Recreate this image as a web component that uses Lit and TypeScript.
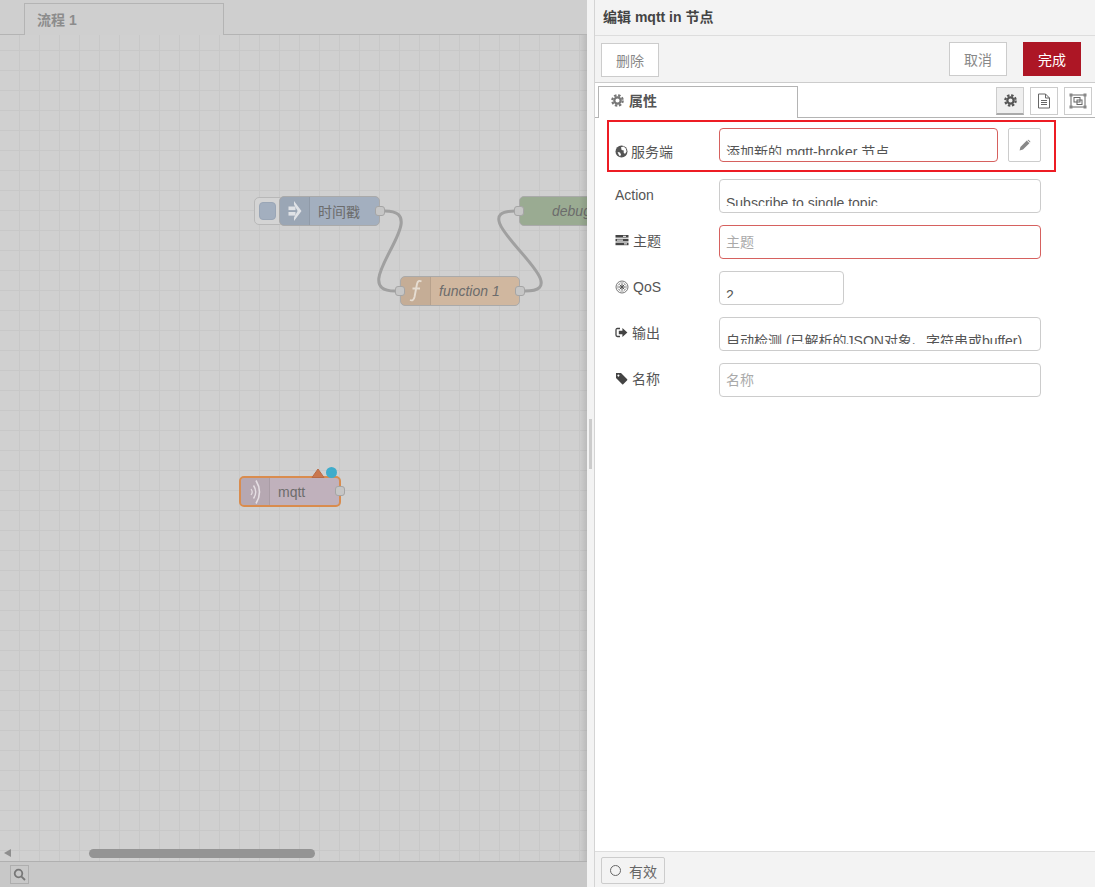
import { LitElement, html, css, svg } from "lit";
import { customElement } from "lit/decorators.js";

const gear = svg`<svg class="ic" width="13" height="13" viewBox="0 0 14 14"><circle cx="7" cy="7" r="5.6" fill="none" stroke="currentColor" stroke-width="2.4" stroke-dasharray="2.6 1.8"/><circle cx="7" cy="7" r="3.4" fill="none" stroke="currentColor" stroke-width="2.4"/></svg>`;

const globe = svg`<svg class="ic" width="13" height="13" viewBox="0 0 13 13"><circle cx="6.5" cy="6.5" r="6" fill="#555"/><path d="M6 2.2 L8.6 1.6 L10.8 3.4 L11.6 6.6 L10 9 L8.6 7.6 L8.8 5.6 L6.6 5 Z M2.6 7 L5 7.6 L6 9.6 L5 11.4 L3.6 9.6 Z" fill="#fff"/></svg>`;

const tasks = svg`<svg class="ic" width="14" height="14" viewBox="0 0 14 14" fill="#444"><rect x="0.5" y="2" width="13" height="2.6"/><rect x="0.5" y="5.8" width="13" height="2.6"/><rect x="0.5" y="9.6" width="13" height="2.6"/><rect x="8" y="2.8" width="3" height="1" fill="#fff"/><rect x="2" y="6.6" width="6" height="1" fill="#fff"/><rect x="9" y="10.4" width="3" height="1" fill="#fff"/></svg>`;

const qos = svg`<svg class="ic" width="14" height="14" viewBox="0 0 14 14"><circle cx="7" cy="7" r="6" fill="none" stroke="#777" stroke-width="1"/><circle cx="7" cy="7" r="4.4" fill="none" stroke="#aaa" stroke-width="0.8"/><path d="M7 3.4V10.6M3.4 7H10.6M4.5 4.5L9.5 9.5M9.5 4.5L4.5 9.5" stroke="#555" stroke-width="1"/><circle cx="7" cy="7" r="1.2" fill="#555"/></svg>`;

const signOut = svg`<svg class="ic" width="13" height="13" viewBox="0 0 13 13"><path d="M5 2.5H2.4Q1 2.5 1 3.9V9.1Q1 10.5 2.4 10.5H5" fill="none" stroke="#444" stroke-width="1.3"/><path d="M3.8 4.8H7.4V2L12.4 6.5L7.4 11V8.2H3.8Z" fill="#444"/></svg>`;

const tag = svg`<svg class="ic" width="13" height="13" viewBox="0 0 13 13"><path fill-rule="evenodd" d="M1 1H6L12.2 7.2Q12.6 7.8 12.2 8.2L8.2 12.2Q7.6 12.6 7.2 12.2L1 6Z M3.4 2.4A1 1 0 1 0 3.41 2.4Z" fill="#444"/></svg>`;

const pencil = svg`<svg width="12" height="12" viewBox="0 0 12 12"><path d="M0.6 11.4L1.4 8L7.8 1.6L10.4 4.2L4 10.6Z M8.6 0.9Q9.2 0.4 9.8 0.9L11.1 2.2Q11.6 2.8 11.1 3.4L10.9 3.6L8.4 1.1Z" fill="#888"/></svg>`;

const fileDoc = svg`<svg width="14" height="16" viewBox="0 0 14 16" fill="none" stroke="#666" stroke-width="1"><path d="M1.5 1H8.5L12.5 5V15H1.5Z"/><path d="M8.5 1V5H12.5M4 7.5H10M4 9.5H10M4 11.5H10"/></svg>`;

const objectGroup = svg`<svg width="18" height="16" viewBox="0 0 18 16" fill="none" stroke="#666"><rect x="2" y="2" width="14" height="12"/><rect x="5" y="4.5" width="6" height="4.5"/><rect x="8" y="7" width="5" height="4.5"/><g fill="#888" stroke="none"><rect x="0.5" y="0.5" width="3" height="3"/><rect x="14.5" y="0.5" width="3" height="3"/><rect x="0.5" y="12.5" width="3" height="3"/><rect x="14.5" y="12.5" width="3" height="3"/></g></svg>`;

const arrowIn = svg`<svg width="14" height="22" viewBox="0 0 14 22" fill="#dfe2e6"><rect x="0.5" y="6.5" width="7" height="3.6"/><rect x="0.5" y="12" width="7" height="3.6"/><path d="M6 1L13.5 11L6 21V17.4L9.6 11L6 4.6Z"/></svg>`;

const funcIcon = svg`<svg width="16" height="24" viewBox="0 0 16 24" fill="none" stroke="#e6ddd2" stroke-width="1.9"><path d="M13.5 2.5Q10 0.5 9 5L6.5 18Q5.5 22.5 2 21M4.5 9.5H12"/></svg>`;

const waves = svg`<svg width="11" height="26" viewBox="0 0 11 26" fill="none" stroke="#e6dfe4"><path stroke-width="1.2" d="M1 10Q3.4 13 1 16"/><path stroke-width="1.4" d="M3.5 6.5Q8 13 3.5 19.5"/><path stroke-width="1.6" d="M6 1.5Q13 13 6 24.5"/></svg>`;

const rows = [
  { label: "Action", icon: null, text: "Subscribe to single topic" },
  { label: "主题", icon: tasks, placeholder: "主题", invalid: true, up: true },
  { label: "QoS", icon: qos, text: "2", short: true },
  { label: "输出", icon: signOut, text: "自动检测 (已解析的JSON对象、字符串或buffer)", up: true },
  { label: "名称", icon: tag, placeholder: "名称", up: true },
];

@customElement("app-root")
export class AppRoot extends LitElement {
  static styles = css`
    :host {
      display: flex;
      width: 1095px;
      height: 887px;
      overflow: hidden;
      font-family: "Liberation Sans", "Noto Sans CJK SC", sans-serif;
      font-size: 14px;
      color: #555;
    }
    .ic { flex: none; }

    /* left side, dimmed editor */
    .editor {
      width: 587px;
      flex: none;
      display: flex;
      flex-direction: column;
      background: #cfcfcf;
    }
    .tabs {
      height: 35px;
      box-sizing: border-box;
      flex: none;
      padding: 3px 0 0 24px;
      border-bottom: 1px solid #b4b4b4;
    }
    .tabs div {
      width: 200px;
      height: 32px;
      box-sizing: border-box;
      padding: 5px 0 0 12px;
      border: 1px solid #b4b4b4;
      border-bottom: none;
      background: #cfcfcf;
      color: #8c8c8c;
      font-weight: bold;
    }
    .workspace {
      flex: 1;
      position: relative;
      overflow: hidden;
      background-color: #d0d0d0;
      background-image:
        linear-gradient(#c8c8c8 1px, transparent 1px),
        linear-gradient(90deg, #c8c8c8 1px, transparent 1px);
      background-size: 20px 20px;
      background-position: 19px 15px;
    }
    .shade {
      position: absolute;
      top: 0;
      right: 0;
      bottom: 0;
      width: 8px;
      background: linear-gradient(90deg, rgba(0, 0, 0, 0), rgba(0, 0, 0, 0.1));
      z-index: 3;
    }
    .wires { position: absolute; left: 0; top: -35px; }
    .node {
      position: absolute;
      height: 30px;
      box-sizing: border-box;
      display: flex;
      align-items: center;
      border: 1px solid #aaa;
      border-radius: 5px;
      color: #6c6c6c;
      z-index: 1;
    }
    .node .iconbox {
      width: 30px;
      height: 100%;
      flex: none;
      display: flex;
      align-items: center;
      justify-content: center;
      background: rgba(0, 0, 0, 0.05);
      border-right: 1px solid rgba(0, 0, 0, 0.07);
      box-sizing: border-box;
      border-radius: 4px 0 0 4px;
    }
    .node .lbl { padding-left: 8px; white-space: nowrap; }
    .node .lbl.it { font-style: italic; }
    .port {
      position: absolute;
      top: 9px;
      width: 10px;
      height: 10px;
      box-sizing: border-box;
      background: #c6c6c6;
      border: 1px solid #a5a5a5;
      border-radius: 3px;
      z-index: 2;
    }
    .port.out { right: -6px; }
    .port.in { left: -6px; }
    .inject { left: 279px; top: 161px; width: 101px; background: #a3afbf; }
    .inject-btn {
      position: absolute;
      left: 254px;
      top: 162px;
      width: 30px;
      height: 28px;
      box-sizing: border-box;
      background: #d4d4d4;
      border: 1px solid #b8b8b8;
      border-radius: 5px;
    }
    .inject-btn div {
      width: 17px;
      height: 18px;
      margin: 4px;
      background: #a3afbf;
      border: 1px solid #9aa6b6;
      box-sizing: border-box;
      border-radius: 4px;
    }
    .func { left: 400px; top: 241px; width: 120px; background: #d0b79f; }
    .func .lbl { padding-left: 8px; }
    .debug { left: 519px; top: 161px; width: 120px; background: #9aab92; }
    .debug .lbl { padding-left: 2px; }
    .debug .iconbox { border-right: none; background: none; }
    .mqtt {
      left: 239px;
      top: 441px;
      width: 102px;
      height: 31px;
      background: #c0b1bc;
      border: 2px solid #d98c4e;
    }
    .mqtt .iconbox { width: 29px; }
    .mqtt .port { top: 8px; right: -6px; }
    .marks { position: absolute; left: 310px; top: 432px; z-index: 2; }

    .scrollbar {
      position: absolute;
      left: 0;
      right: 0;
      bottom: 3px;
      height: 9px;
    }
    .arrow {
      position: absolute;
      left: 4px;
      top: 0;
      width: 0;
      height: 0;
      border-style: solid;
      border-width: 4.5px 7px 4.5px 0;
      border-color: transparent #8e8e8e transparent transparent;
    }
    .thumb {
      position: absolute;
      left: 89px;
      width: 226px;
      height: 9px;
      border-radius: 5px;
      background: #949494;
    }
    .status {
      height: 26px;
      flex: none;
      box-sizing: border-box;
      padding: 3px 0 0 10px;
      background: #c8c8c8;
      border-top: 1px solid #b0b0b0;
    }
    .status div {
      width: 19px;
      height: 19px;
      box-sizing: border-box;
      border: 1px solid #aeaeae;
      display: flex;
      align-items: center;
      justify-content: center;
    }

    /* right side, edit tray */
    .handle {
      width: 7px;
      flex: none;
      background: #f3f3f3;
      border-right: 1px solid #d4d4d4;
      display: flex;
      align-items: center;
      justify-content: center;
    }
    .handle div { width: 3px; height: 50px; background: #ccc; }
    .tray {
      flex: 1;
      min-width: 0;
      display: flex;
      flex-direction: column;
      position: relative;
      background: #fff;
    }
    .title {
      height: 36px;
      box-sizing: border-box;
      padding: 9px 0 0 8px;
      background: #f3f3f3;
      border-bottom: 1px solid #ddd;
      color: #444;
      font-weight: bold;
      font-size: 14px;
      line-height: 16px;
    }
    .actions {
      height: 47px;
      box-sizing: border-box;
      display: flex;
      padding: 6px 14px 0 6px;
      gap: 16px;
      background: #f3f3f3;
      border-bottom: 1px solid #ccc;
    }
    .btn {
      width: 58px;
      height: 34px;
      box-sizing: border-box;
      display: flex;
      align-items: center;
      justify-content: center;
      background: #fff;
      border: 1px solid #ccc;
      color: #888;
    }
    .btn.del { margin-top: 1px; margin-right: auto; }
    .btn.done { background: #ad1625; border-color: #ad1625; color: #fff; }
    .tabbar {
      height: 35px;
      box-sizing: border-box;
      display: flex;
      padding: 3px 3px 0 3px;
      border-bottom: 1px solid #b4b4b4;
    }
    .tab {
      width: 200px;
      height: 32px;
      box-sizing: border-box;
      display: flex;
      align-items: center;
      gap: 5px;
      padding: 0 0 5px 12px;
      background: #fff;
      border: 1px solid #b4b4b4;
      border-bottom: none;
      color: #555;
      font-weight: bold;
      font-size: 14px;
    }
    .tab .ic { color: #777; }
    .tools { margin-left: auto; margin-top: 1px; display: flex; gap: 6px; }
    .tool {
      width: 28px;
      height: 28px;
      box-sizing: border-box;
      display: flex;
      align-items: center;
      justify-content: center;
      border: 1px solid #ccc;
      background: #fff;
    }
    .tool.on { background: #efefef; border-bottom: 2px solid #aaa; color: #555; }
    .form {
      flex: 1;
      display: flex;
      flex-direction: column;
      gap: 12px;
      padding: 10px 0 0 20px;
      position: relative;
    }
    .row { display: flex; align-items: center; height: 34px; }
    .row.first { margin-bottom: 5px; }
    .row label {
      width: 104px;
      flex: none;
      display: flex;
      align-items: center;
      gap: 4px;
      box-sizing: border-box;
      padding-bottom: 2px;
      white-space: nowrap;
    }
    .row label.up { padding-bottom: 4px; }
    .row label.low { padding: 12px 0 0; gap: 3px; }
    .field {
      width: 322px;
      height: 34px;
      box-sizing: border-box;
      padding: 6px 6px 7px;
      border: 1px solid #ccc;
      border-radius: 4px;
      background: #fff;
      overflow: hidden;
      font: inherit;
      color: #555;
    }
    .field.short { width: 125px; }
    .field.wide { width: 279px; }
    .field.bad { border-color: #d6615f; }
    .field .clip {
      height: 20px;
      overflow: hidden;
      white-space: nowrap;
    }
    .field .clip span { display: block; padding-top: 7px; line-height: 20px; }
    input.field { outline: none; padding: 6px; }
    input.field::placeholder { color: #aaa; opacity: 1; }
    .edit {
      width: 33px;
      height: 34px;
      margin-left: 10px;
      box-sizing: border-box;
      display: flex;
      align-items: center;
      justify-content: center;
      border: 1px solid #ccc;
      border-radius: 2px;
      background: #fff;
    }
    .annot {
      position: absolute;
      left: 12px;
      top: 2px;
      width: 449px;
      height: 52px;
      box-sizing: border-box;
      border: 2px solid #ed1c24;
      pointer-events: none;
    }
    .foot {
      height: 36px;
      box-sizing: border-box;
      padding: 5px 0 0 6px;
      background: #f3f3f3;
      border-top: 1px solid #ddd;
    }
    .foot div {
      width: 64px;
      height: 27px;
      box-sizing: border-box;
      display: flex;
      align-items: center;
      gap: 8px;
      padding-left: 8px;
      border: 1px solid #ccc;
      border-radius: 2px;
      color: #666;
    }
    .foot i {
      width: 11px;
      height: 11px;
      box-sizing: border-box;
      border: 1.5px solid #666;
      border-radius: 50%;
    }
  `;

  renderRow(r: any) {
    return html`<div class="row">
      <label class=${r.up ? "up" : ""}>${r.icon}<span>${r.label}</span></label>
      ${r.placeholder
        ? html`<input class="field ${r.invalid ? "bad" : ""}" placeholder=${r.placeholder} />`
        : html`<div class="field ${r.short ? "short" : ""}">
            <div class="clip"><span>${r.text}</span></div>
          </div>`}
    </div>`;
  }

  render() {
    return html`
      <div class="editor">
        <div class="tabs"><div>流程 1</div></div>
        <div class="workspace">
          <svg class="wires" width="587" height="400" fill="none" stroke="#a0a0a0" stroke-width="3">
            <path d="M385 211C437 211 343 291 395 291" />
            <path d="M525 291C585 291 455 211 515 211" />
          </svg>
          <div class="inject-btn"><div></div></div>
          <div class="node inject">
            <div class="iconbox">${arrowIn}</div>
            <div class="lbl">时间戳</div>
            <div class="port out"></div>
          </div>
          <div class="node func">
            <div class="iconbox">${funcIcon}</div>
            <div class="lbl it">function 1</div>
            <div class="port in"></div>
            <div class="port out"></div>
          </div>
          <div class="node debug">
            <div class="iconbox"></div>
            <div class="lbl it">debug</div>
            <div class="port in"></div>
          </div>
          <div class="node mqtt">
            <div class="iconbox">${waves}</div>
            <div class="lbl">mqtt</div>
            <div class="port out"></div>
          </div>
          <svg class="marks" width="30" height="16" viewBox="0 0 30 16">
            <path d="M2 10.5L8 2L14 10.5Z" fill="#c9774e" stroke="#b96a45" />
            <circle cx="21.5" cy="5.5" r="5.5" fill="#3faccb" />
          </svg>
          <div class="shade"></div>
          <div class="scrollbar">
            <div class="arrow"></div>
            <div class="thumb"></div>
          </div>
        </div>
        <div class="status">
          <div>
            <svg width="13" height="13" viewBox="0 0 13 13" fill="none" stroke="#777" stroke-width="1.8">
              <circle cx="5.5" cy="5.5" r="3.8" />
              <path d="M8.3 8.3L12 12" />
            </svg>
          </div>
        </div>
      </div>
      <div class="handle"><div></div></div>
      <div class="tray">
        <div class="title">编辑 mqtt in 节点</div>
        <div class="actions">
          <div class="btn del">删除</div>
          <div class="btn">取消</div>
          <div class="btn done">完成</div>
        </div>
        <div class="tabbar">
          <div class="tab">${gear}<span>属性</span></div>
          <div class="tools">
            <div class="tool on">${gear}</div>
            <div class="tool">${fileDoc}</div>
            <div class="tool">${objectGroup}</div>
          </div>
        </div>
        <div class="form">
          <div class="row first">
            <label class="low">${globe}<span>服务端</span></label>
            <div class="field wide bad">
              <div class="clip"><span>添加新的 mqtt-broker 节点</span></div>
            </div>
            <div class="edit">${pencil}</div>
          </div>
          ${rows.map((r) => this.renderRow(r))}
          <div class="annot"></div>
        </div>
        <div class="foot">
          <div><i></i><span>有效</span></div>
        </div>
      </div>
    `;
  }
}
